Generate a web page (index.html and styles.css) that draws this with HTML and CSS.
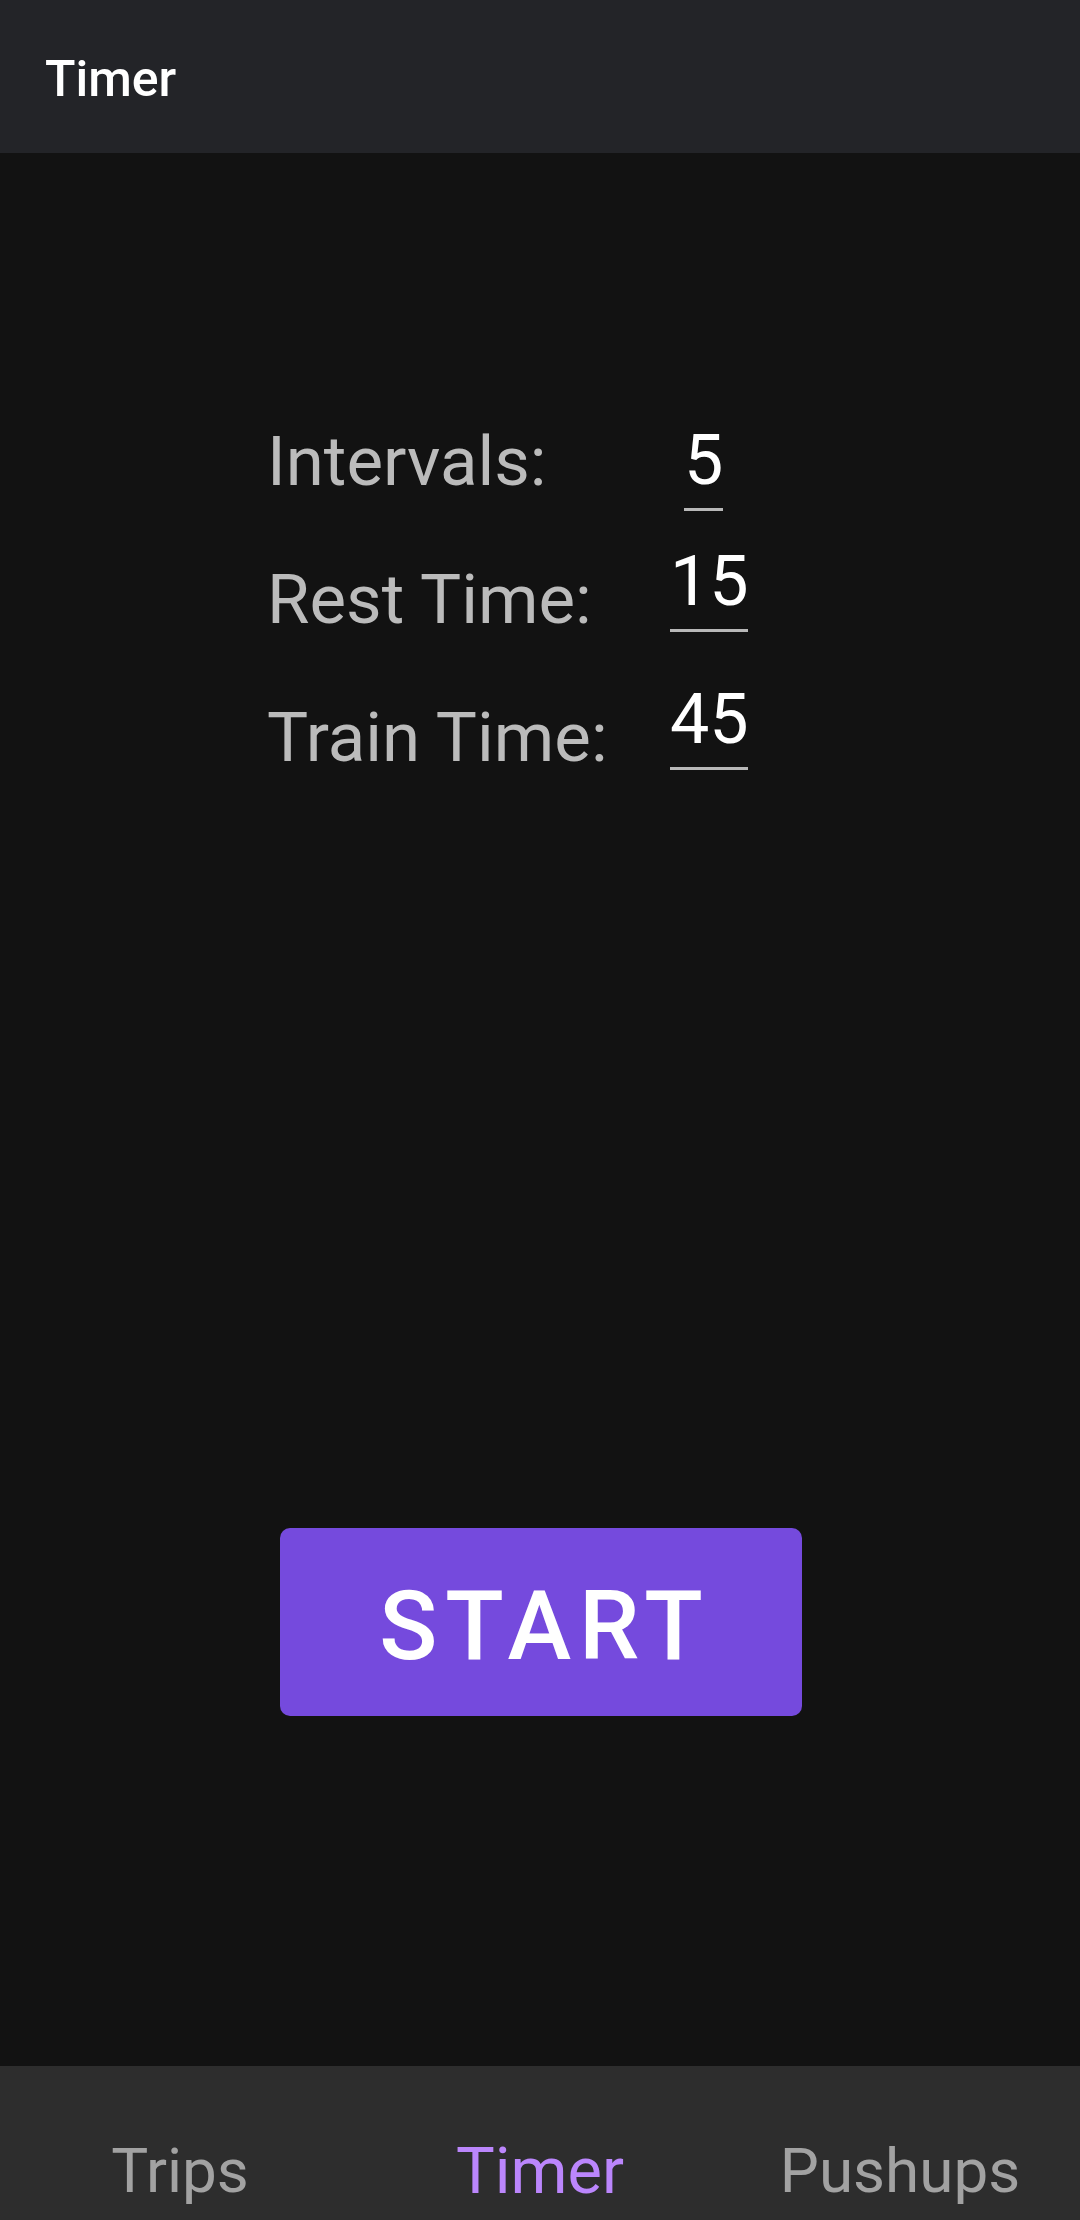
FILE: index.html
```html
<!DOCTYPE html>
<html>
<head>
<meta charset="utf-8">
<link rel="stylesheet" href="styles.css">
</head>
<body>
<header class="appbar"><span class="title">Timer</span></header>
<main class="content">
  <div class="form">
    <div class="row">
      <span class="label">Intervals:</span>
      <span class="field field-short">5</span>
    </div>
    <div class="row">
      <span class="label">Rest Time:</span>
      <span class="field">15</span>
    </div>
    <div class="row">
      <span class="label">Train Time:</span>
      <span class="field">45</span>
    </div>
  </div>
  <button class="start">START</button>
</main>
<nav class="bottom-nav">
  <span class="tab">Trips</span>
  <span class="tab active">Timer</span>
  <span class="tab">Pushups</span>
</nav>
</body>
</html>
```

FILE: styles.css
```css
html, body {
  margin: 0;
  padding: 0;
}
body {
  width: 1080px;
  height: 2220px;
  background: #121212;
  font-family: Roboto, "Noto Sans", sans-serif;
  display: flex;
  flex-direction: column;
  overflow: hidden;
}
.appbar {
  height: 153px;
  box-sizing: border-box;
  padding: 5px 0 0 45px;
  background: #232428;
  flex: none;
}
.title {
  display: block;
  font-size: 50px;
  line-height: 148px;
  font-weight: 500;
  color: #ffffff;
}
.content {
  flex: 1;
  display: flex;
  flex-direction: column;
  padding-top: 250px;
}
.form {
  display: grid;
  grid-auto-rows: 138px;
  padding-left: 267px;
}
.row {
  display: flex;
  align-items: flex-start;
}
.label {
  width: 403px;
  padding-top: 19px;
  font-size: 69px;
  line-height: 80px;
  color: #bbbbbb;
}
.field {
  width: 78px;
  font-size: 70px;
  line-height: 80px;
  padding-bottom: 8px;
  border-bottom: 3px solid #b8b8b8;
  color: #ffffff;
  text-align: center;
}
.field-short {
  width: 39px;
  margin-left: 14px;
  margin-top: 17px;
}
.start {
  align-self: center;
  margin: 711px 0 0 2px;
  width: 522px;
  height: 188px;
  border: none;
  border-radius: 10px;
  background: #754add;
  color: #ffffff;
  font-family: Roboto, "Noto Sans", sans-serif;
  font-size: 96px;
  font-weight: 500;
  letter-spacing: 8px;
  line-height: 96px;
  padding: 8px 0 0 8px;
}
.bottom-nav {
  flex: none;
  height: 154px;
  box-sizing: border-box;
  background: #2d2d2d;
  display: grid;
  grid-template-columns: 1fr 1fr 1fr;
  padding-top: 69px;
}
.tab {
  text-align: center;
  font-size: 62px;
  line-height: 72px;
  color: #a2a2a2;
}
.tab.active {
  font-size: 65px;
  color: #bb86fc;
}
```
